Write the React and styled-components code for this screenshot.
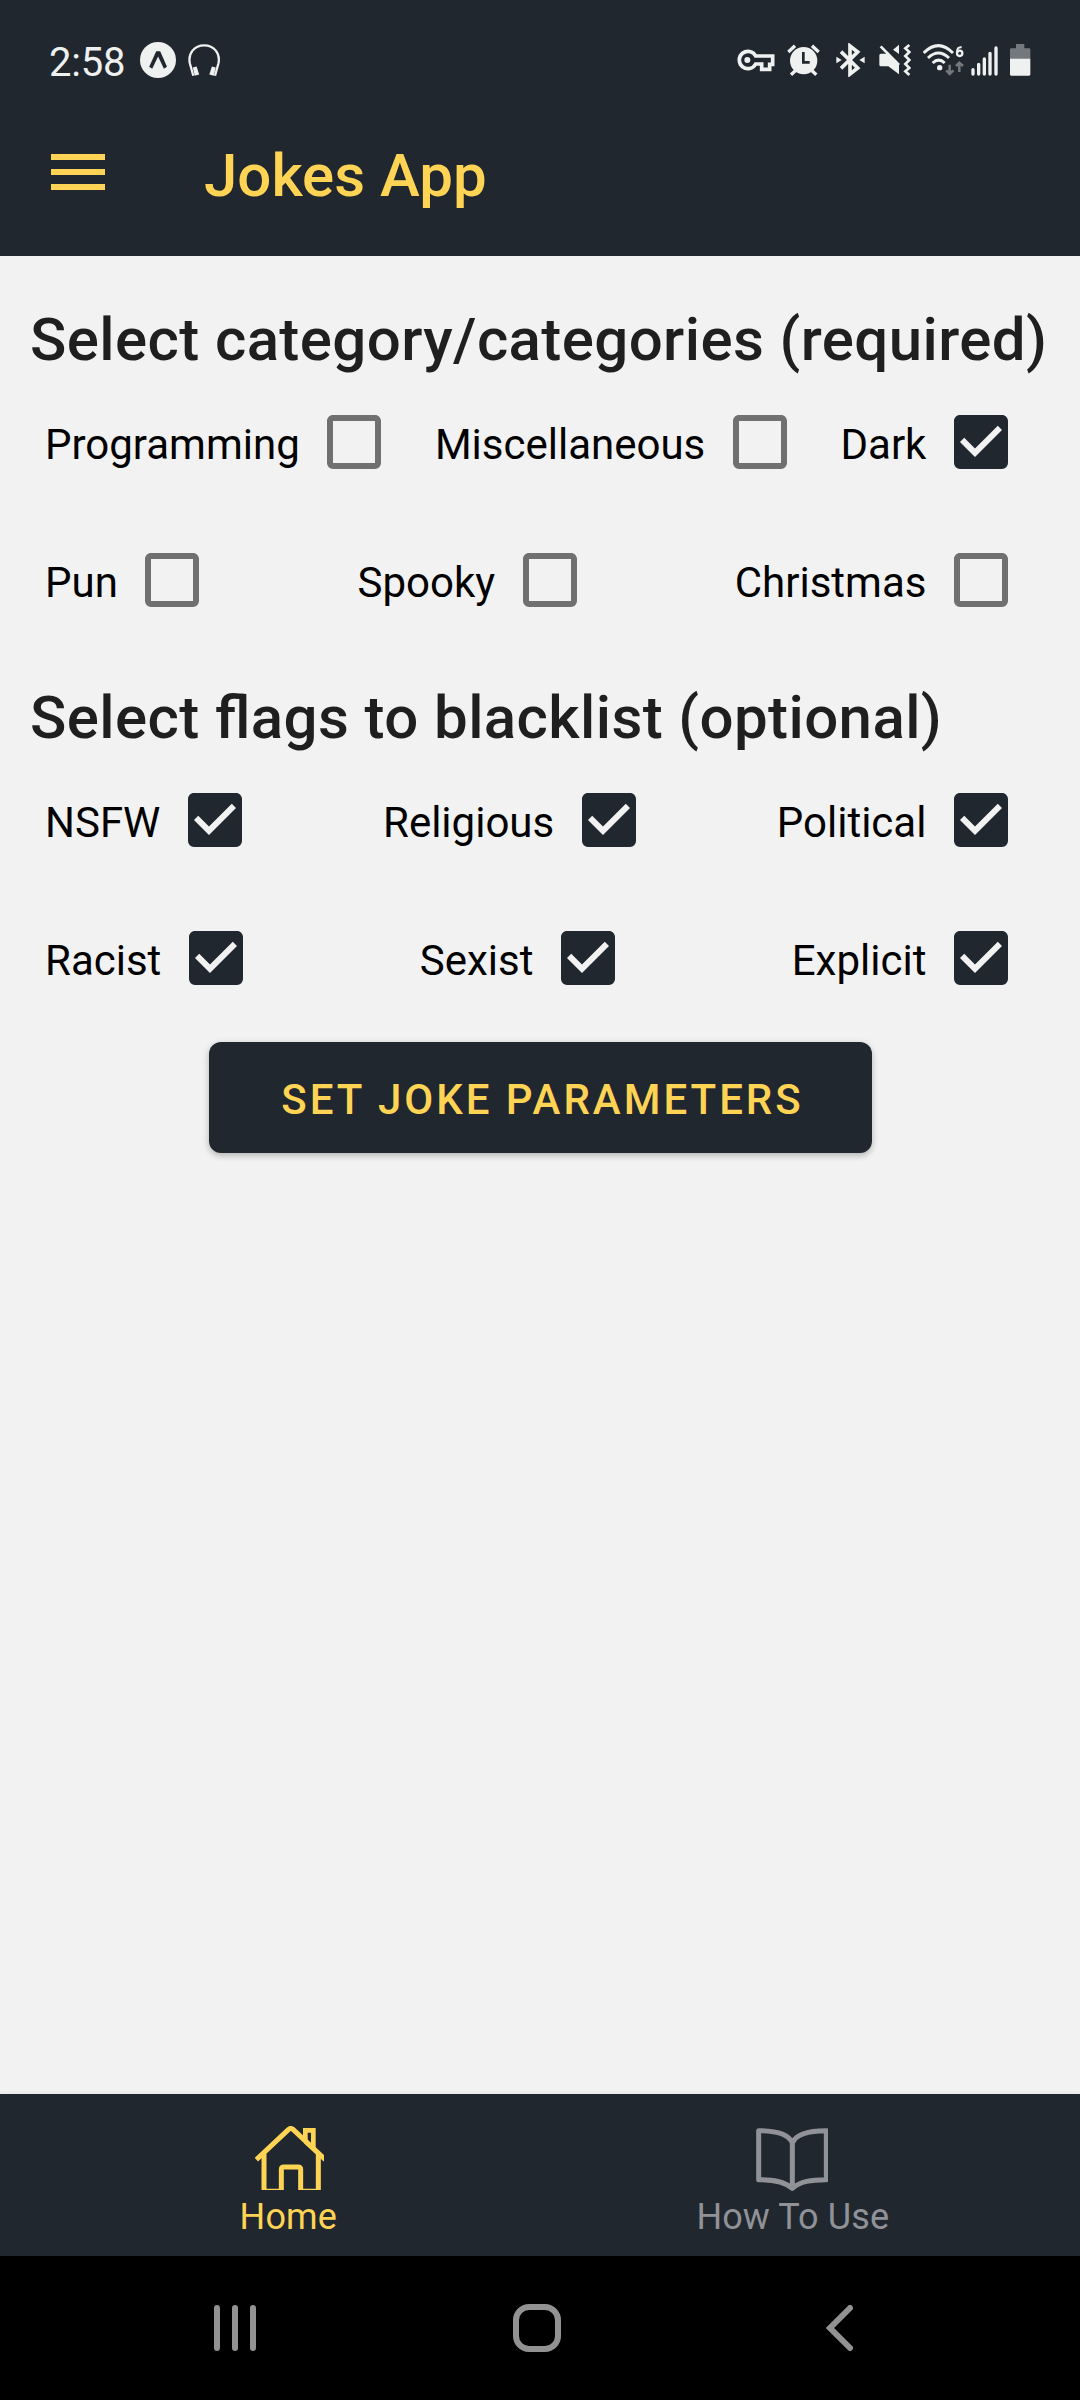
import React, { useState } from "react";
import styled, { createGlobalStyle } from "styled-components";

const ink = "#21272f";
const gold = "#ffd454";
const paper = "#f2f2f2";
const light = "#eff1f0";

const GlobalStyle = createGlobalStyle`
  *, *::before, *::after { box-sizing: border-box; }
  body { margin: 0; background: ${paper}; }
  svg { display: block; flex: none; }
`;

const Screen = styled.div`
  width: 1080px;
  height: 2400px;
  display: flex;
  flex-direction: column;
  overflow: hidden;
  background: ${paper};
  font-family: Roboto, "Liberation Sans", sans-serif;
`;

const StatusBar = styled.div`
  height: 87px;
  padding: 33px 49px 0 49px;
  display: flex;
  justify-content: space-between;
  background: ${ink};
  color: ${light};
`;

const StatusGroup = styled.div`
  height: 54px;
  display: flex;
  align-items: center;
`;

const Clock = styled.span`
  font-size: 40px;
  line-height: 54px;
  padding-top: 5px;
  width: 91px;
  letter-spacing: -0.2px;
`;

const Glyph = styled.svg`
  margin-left: ${(p) => p.$lead || 0}px;
`;

const Header = styled.header`
  height: 169px;
  padding: 0 51px;
  display: flex;
  align-items: flex-start;
  background: ${ink};
`;

const MenuButton = styled.button`
  width: 54px;
  height: 36px;
  margin: 67px 99px 0 0;
  padding: 0;
  border: 0;
  background: none;
  display: flex;
  flex-direction: column;
  justify-content: space-between;
`;

const MenuBar = styled.span`
  height: 6px;
  background: ${gold};
`;

const Title = styled.h1`
  margin: 54px 0 0;
  font-size: 60px;
  line-height: 70px;
  font-weight: 500;
  color: ${gold};
`;

const Main = styled.main`
  flex: 1;
  display: flex;
  flex-direction: column;
  padding-top: 36px;
`;

const Section = styled.section`
  height: 378px;
`;

const SectionTitle = styled.h2`
  margin: 3px 0;
  height: 90px;
  padding-left: 30px;
  font-size: 60px;
  line-height: 90px;
  font-weight: 500;
  letter-spacing: 0.4px;
  font-variant-ligatures: common-ligatures;
  font-feature-settings: "liga" 1;
  white-space: nowrap;
  color: #1f1f1f;
`;

const Options = styled.div`
  display: flex;
  flex-direction: column;
  gap: 30px;
`;

const OptionRow = styled.div`
  height: 108px;
  padding: 0 45px;
  display: flex;
  justify-content: space-between;
`;

const Option = styled.label`
  display: flex;
  align-items: center;
  color: #000;
`;

const OptionText = styled.span`
  font-size: 42px;
  line-height: 50px;
  padding: 6px 0.6px 0 0;
`;

const CheckButton = styled.button`
  width: 108px;
  height: 108px;
  padding: 18px;
  border: 0;
  background: none;
  color: ${(p) => (p.$on ? ink : "#707070")};
`;

const Submit = styled.button`
  align-self: center;
  width: 663px;
  height: 111px;
  margin: -6px 0 0 1px;
  padding: 4px 0 0 4px;
  border: 0;
  border-radius: 12px;
  background: ${ink};
  color: ${gold};
  font: 500 42px/50px Roboto, "Liberation Sans", sans-serif;
  letter-spacing: 3px;
  box-shadow: 0 3px 6px rgba(0, 0, 0, 0.2), 0 1px 10px rgba(0, 0, 0, 0.07);
`;

const TabBar = styled.nav`
  height: 162px;
  padding: 0 35px 0 36px;
  display: grid;
  grid-template-columns: 1fr 1fr;
  background: ${ink};
  box-shadow: 0 -1px 4px rgba(0, 0, 0, 0.06);
`;

const Tab = styled.a`
  display: flex;
  flex-direction: column;
  align-items: center;
  padding-top: 32px;
  color: ${(p) => (p.$active ? gold : "#909297")};
`;

const TabIcon = styled.div`
  height: 64px;
  padding-top: ${(p) => p.$drop || 0}px;
  margin-left: ${(p) => p.$shift || 0}px;
`;

const TabLabel = styled.span`
  margin-top: 6px;
  font-size: 36px;
  line-height: 42px;
  letter-spacing: 0.1px;
`;

const SystemBar = styled.div`
  height: 144px;
  padding: 0 227px 0 214px;
  display: flex;
  align-items: center;
  justify-content: space-between;
  background: #000;
`;

const HomeKey = styled.svg`
  margin-right: 8px;
`;

function LeftStatusIcons() {
  return (
    <>
      <Glyph width="36" height="36" viewBox="0 0 36 36" $lead={0}>
        <circle cx="18" cy="18" r="18" fill={light} />
        <path d="M16.2 9.2h4l6.8 15.6-3.1 1.9-5.8-12.2-5.9 12.2-3-1.9z" fill={ink} />
      </Glyph>
      <Glyph width="33" height="33" viewBox="0 0 33 33" $lead={12} fill="none">
        <path d="M5.3 31.8L1.9 19.5C-.3 9.5 6.3 1.3 16.2 1.3S32.6 9.5 30.4 19.500L27 31.800" stroke={light} strokeWidth="2.3" />
        <path d="M4.800 23.500l3.800-1 2.600 8-4.500 1.200zM27.700 23.500l-3.800-1-2.600 8 4.500 1.200z" fill={light} />
      </Glyph>
    </>
  );
}

function RightStatusIcons() {
  return (
    <>
      <Glyph width="38" height="34" viewBox="52 39 114 102" fill="none" stroke={light}>
        <path d="M108 78H159V103H150V118H126V102H108A26 26 0 1 1 108 78Z" strokeWidth="11" />
        <circle cx="83" cy="90" r="9" fill={light} stroke="none" />
      </Glyph>
      <Glyph width="33" height="34" viewBox="202 39 99 102" $lead={12} fill="none" stroke={light}>
        <circle cx="252" cy="92" r="41" fill={light} stroke="none" />
        <path d="M206 66L226 47M297 66L277 47M227 122L214 134M277 122L290 134" strokeWidth="10" />
        <path d="M251 66V97H270" stroke={ink} strokeWidth="8" />
      </Glyph>
      <Glyph width="29" height="34" viewBox="347 39 87 102" $lead={15.500} fill="none" stroke={light}>
        <path d="M362 65L412 114L389 132V48L412 66L362 115" strokeWidth="11" />
        <path d="M348 80L364 90L348 100ZM433 80L417 90L433 100Z" fill={light} stroke="none" />
      </Glyph>
      <Glyph width="32" height="34" viewBox="477 39 96 102" $lead={14.500} fill={light}>
        <path d="M483 71H501L537 105V133L505 109H483Q478 109 478 104V76Q478 71 483 71ZM537 44V72L519 59Z" />
        <path d="M482 49L537 105" stroke={light} strokeWidth="8" />
        <path d="M568 45L556 55L568 66L556 78L568 90L556 102L568 114L556 124L568 135" fill="none" stroke={light} strokeWidth="8" />
      </Glyph>
      <Glyph width="41" height="34" viewBox="608 39 123 102" $lead={11.500} fill="none" stroke={light}>
        <path d="M610 69Q654 25 698 69M623 84Q654 54 686 84M637 99Q655 82 673 99" strokeWidth="9" />
        <circle cx="658" cy="113" r="8" fill={light} stroke="none" />
        <path d="M724 52Q708 50 711 69" strokeWidth="6" />
        <circle cx="718" cy="70" r="8" strokeWidth="7" />
        <path d="M688 104V132M678 121L688 132L699 121M717 126V98M707 108L717 98L728 108" stroke="#74787c" strokeWidth="7.500" />
      </Glyph>
      <Glyph width="27" height="34" viewBox="753 39 81 102" $lead={7.500} stroke={light} strokeWidth="10" strokeLinecap="round">
        <path d="M759 119V132M776 103V132M793 87V132M810 70V132M828 54V132" />
      </Glyph>
      <Glyph width="21" height="34" viewBox="872 39 63 102" $lead={12} fill="#74787c">
        <path d="M890 42H915V55H930Q933 55 933 59V87H872V59Q872 55 876 55H890Z" />
        <path d="M872 86H933V133Q933 137 929 137H876Q872 137 872 133Z" fill={light} />
      </Glyph>
    </>
  );
}

function HomeIcon() {
  return (
    <svg width="69" height="64" viewBox="165 138 207 192" fill="none" stroke="currentColor" strokeWidth="15" strokeLinejoin="round">
      <path d="M169 239L266 148Q272 143 279 148L376 239" />
      <path d="M192 222V334H244V268Q244 261 252 261H294Q302 261 302 268V334H355V222" strokeLinejoin="miter" />
      <path d="M316 184V151H340V206L316 184" strokeWidth="14" strokeLinejoin="miter" />
    </svg>
  );
}

function BookIcon() {
  return (
    <svg width="72" height="63" viewBox="228 143 216 189" fill="none" stroke="currentColor" strokeWidth="15" strokeLinejoin="round">
      <path d="M337 188C325 157 281 151 236 151V298C281 298 313 303 337 324C361 303 393 298 439 298V151C393 151 349 157 337 188V324" />
    </svg>
  );
}

const BOX = "M19,3H5C3.89,3 3,3.89 3,5V19A2,2 0 0,0 5,21H19A2,2 0 0,0 21,19V5C21,3.89 20.1,3 19,3";

function CheckOption({ label, initial }) {
  const [on, setOn] = useState(initial);
  return (
    <Option>
      <OptionText>{label}</OptionText>
      <CheckButton $on={on} role="checkbox" aria-checked={on} aria-label={label} onClick={() => setOn(!on)}>
        <svg width="72" height="72" viewBox="0 0 24 24" fill="currentColor">
          <path
            fillRule="evenodd"
            d={on ? `M10,17L5,12L6.41,10.58L10,14.17L17.59,6.58L19,8Z${BOX}Z` : `${BOX}ZM19,5V19H5V5H19Z`}
          />
        </svg>
      </CheckButton>
    </Option>
  );
}

const SECTIONS = [
  {
    title: "Select category/categories (required)",
    rows: [
      [["Programming", false], ["Miscellaneous", false], ["Dark", true]],
      [["Pun", false], ["Spooky", false], ["Christmas", false]],
    ],
  },
  {
    title: "Select flags to blacklist (optional)",
    rows: [
      [["NSFW", true], ["Religious", true], ["Political", true]],
      [["Racist", true], ["Sexist", true], ["Explicit", true]],
    ],
  },
];

export default function App() {
  return (
    <Screen>
      <GlobalStyle />
      <StatusBar>
        <StatusGroup>
          <Clock>2:58</Clock>
          <LeftStatusIcons />
        </StatusGroup>
        <StatusGroup>
          <RightStatusIcons />
        </StatusGroup>
      </StatusBar>
      <Header>
        <MenuButton aria-label="Menu">
          <MenuBar />
          <MenuBar />
          <MenuBar />
        </MenuButton>
        <Title>Jokes App</Title>
      </Header>
      <Main>
        {SECTIONS.map((section) => (
          <Section key={section.title}>
            <SectionTitle>{section.title}</SectionTitle>
            <Options>
              {section.rows.map((row, i) => (
                <OptionRow key={i}>
                  {row.map(([label, on]) => (
                    <CheckOption key={label} label={label} initial={on} />
                  ))}
                </OptionRow>
              ))}
            </Options>
          </Section>
        ))}
        <Submit>SET JOKE PARAMETERS</Submit>
      </Main>
      <TabBar>
        <Tab $active>
          <TabIcon $shift={3}>
            <HomeIcon />
          </TabIcon>
          <TabLabel>Home</TabLabel>
        </Tab>
        <Tab>
          <TabIcon $drop={2} $shift={-2}>
            <BookIcon />
          </TabIcon>
          <TabLabel>How To Use</TabLabel>
        </Tab>
      </TabBar>
      <SystemBar>
        <svg width="42" height="46" viewBox="0 0 42 46" stroke="#929292" strokeWidth="6" strokeLinecap="round">
          <path d="M3 3V43M21 3V43M39 3V43" />
        </svg>
        <HomeKey width="48" height="48" viewBox="0 0 48 48" fill="none" stroke="#929292" strokeWidth="6">
          <rect x="3" y="3" width="42" height="42" rx="13" />
        </HomeKey>
        <svg width="27" height="46" viewBox="0 0 27 46" fill="none" stroke="#929292" strokeWidth="6" strokeLinecap="round">
          <path d="M24 3L4 23L24 43" />
        </svg>
      </SystemBar>
    </Screen>
  );
}
